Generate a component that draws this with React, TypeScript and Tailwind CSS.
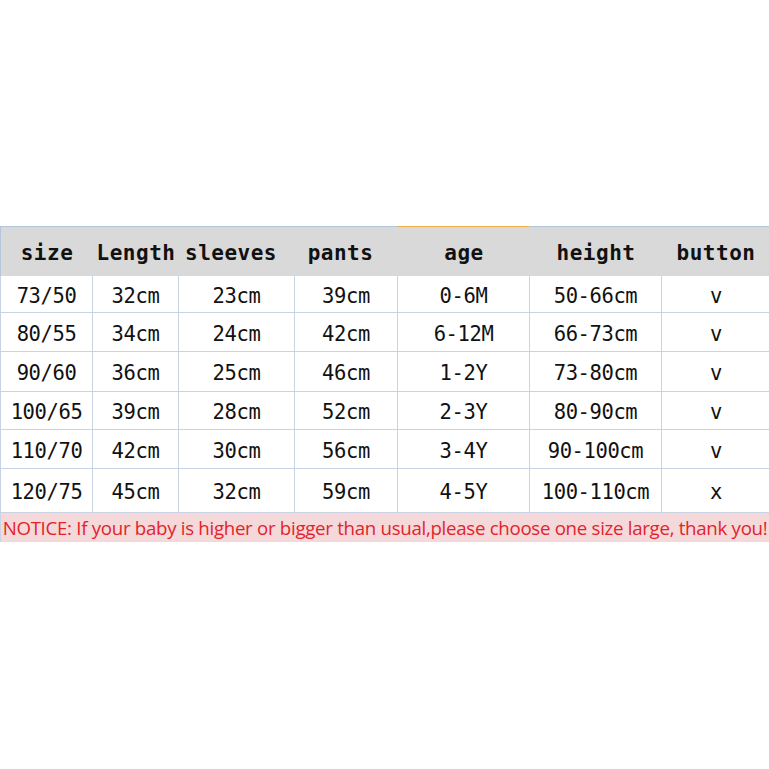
import React from "react";

const heads = ["size", "Length", "sleeves", "pants", "age", "height", "button"];
const headShift = ["", "", "pr-[12px]", "pr-[12px]", "", "", ""];
const rows: { h: string; c: string[] }[] = [
  { h: "h-[37px]", c: ["73/50", "32cm", "23cm", "39cm", "0-6M", "50-66cm", "v"] },
  { h: "h-[39px]", c: ["80/55", "34cm", "24cm", "42cm", "6-12M", "66-73cm", "v"] },
  { h: "h-[40px]", c: ["90/60", "36cm", "25cm", "46cm", "1-2Y", "73-80cm", "v"] },
  { h: "h-[38px]", c: ["100/65", "39cm", "28cm", "52cm", "2-3Y", "80-90cm", "v"] },
  { h: "h-[39px]", c: ["110/70", "42cm", "30cm", "56cm", "3-4Y", "90-100cm", "v"] },
  { h: "h-[44px]", c: ["120/75", "45cm", "32cm", "59cm", "4-5Y", "100-110cm", "x"] },
];

const cols = "grid grid-cols-[92px_86px_116px_103px_132px_132px_108px]";

export default function App() {
  return (
    <div className="w-[769px] h-[769px] bg-white overflow-hidden">
      <div className="mt-[226px] w-[769px]">
        <div className={cols + " h-px"}>
          <div className="bg-[#b4c6dc]" />
          <div className="bg-[#b4c6dc]" />
          <div className="bg-[#b4c6dc]" />
          <div className="bg-[#b4c6dc]" />
          <div className="bg-[#eeae4a]" />
          <div className="bg-[#b4c6dc]" />
          <div className="bg-[#b4c6dc]" />
        </div>
        <div className={cols + " h-[49px] bg-[#d9d9d9] border-l border-[#b4c6dc]"}>
          {heads.map((t, i) => (
            <div
              key={t}
              className={
                "flex items-center justify-center pt-[5px] text-[21px] font-bold text-[#111] font-['DejaVu_Sans_Mono',monospace] tracking-[0.5px] " +
                headShift[i]
              }
            >
              {t}
            </div>
          ))}
        </div>
        {rows.map((r, i) => (
          <div key={i} className={cols + " " + r.h + " border-l border-[#c9d3e3]"}>
            {r.c.map((t, j) => (
              <div
                key={j}
                className={
                  "flex items-center justify-center pt-[4px] border-b border-[#c9d3e3] text-[20.5px] text-[#111] font-['DejaVu_Sans_Mono',monospace] tracking-[-0.4px] " +
                  (j < 6 ? "border-r" : "")
                }
              >
                {t}
              </div>
            ))}
          </div>
        ))}
        <div className="h-[29px] bg-[#f4d8da] border-l border-[#c9d3e3] flex items-center justify-center pt-[1px] text-[18.7px] text-[#e3232b] font-['Open_Sans',sans-serif] whitespace-nowrap tracking-[-0.3px]">
          NOTICE: If your baby is higher or bigger than usual,please choose one size large, thank you!
        </div>
      </div>
    </div>
  );
}
